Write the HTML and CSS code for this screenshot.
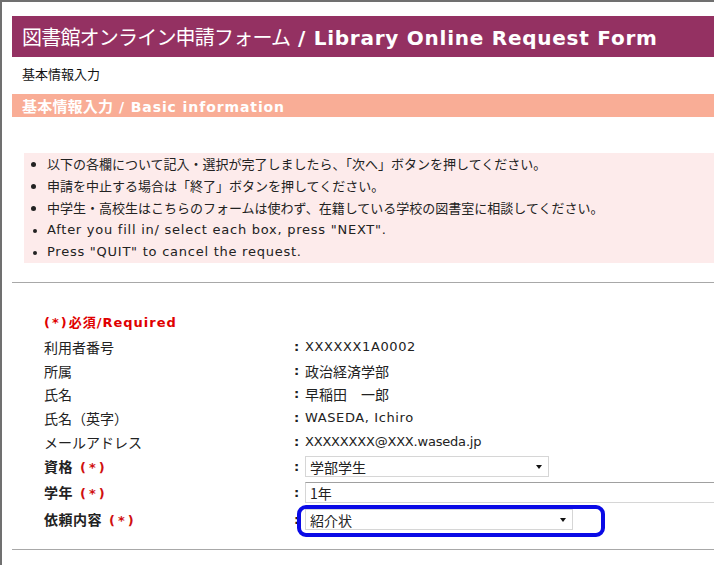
FILE: index.html
```html
<!DOCTYPE html>
<html lang="ja">
<head>
<meta charset="utf-8">
<title>Library Online Request Form</title>
<link rel="stylesheet" href="styles.css">
</head>
<body>
<div class="frame">
  <h1 class="title"><span class="jp">図書館オンライン申請フォーム</span> / Library Online Request Form</h1>
  <div class="crumb">基本情報入力</div>
  <h2 class="section"><span class="jp">基本情報入力</span> / Basic information</h2>

  <ul class="notes">
    <li>以下の各欄について記入・選択が完了しましたら、「次へ」ボタンを押してください。</li>
    <li>申請を中止する場合は「終了」ボタンを押してください。</li>
    <li>中学生・高校生はこちらのフォームは使わず、在籍している学校の図書室に相談してください。</li>
    <li class="en">After you fill in/ select each box, press "NEXT".</li>
    <li class="en">Press "QUIT" to cancel the request.</li>
  </ul>

  <hr class="rule">

  <div class="form">
    <div class="required"><span class="req">(*)</span>必須/Required</div>
    <div class="row"><div class="label">利用者番号</div><div class="colon">:</div><div class="value en">XXXXXX1A0002</div></div>
    <div class="row"><div class="label">所属</div><div class="colon">:</div><div class="value">政治経済学部</div></div>
    <div class="row"><div class="label">氏名</div><div class="colon">:</div><div class="value">早稲田　一郎</div></div>
    <div class="row"><div class="label">氏名（英字）</div><div class="colon">:</div><div class="value en">WASEDA, Ichiro</div></div>
    <div class="row"><div class="label">メールアドレス</div><div class="colon">:</div><div class="value mail">XXXXXXXX@XXX.waseda.jp</div></div>
    <div class="row frow"><div class="label strong">資格<span class="req">(*)</span></div><div class="colon">:</div>
      <div class="value"><div class="select s1"><span>学部学生</span><span class="arrow"></span></div></div></div>
    <div class="row frow"><div class="label strong">学年<span class="req">(*)</span></div><div class="colon">:</div>
      <div class="value grow"><div class="input">1年</div></div></div>
    <div class="row frow last"><div class="label strong">依頼内容<span class="req">(*)</span></div><div class="colon">:</div>
      <div class="value"><div class="mark-wrap"><div class="select s2"><span>紹介状</span><span class="arrow"></span></div><div class="mark"></div></div></div></div>
  </div>

  <hr class="rule bottom">
</div>
</body>
</html>
```

FILE: styles.css
```css
html, body {
  margin: 0;
  padding: 0;
  background: #fff;
}
.frame {
  box-sizing: border-box;
  min-height: 565px;
  border-top: 2px solid #707070;
  border-left: 2px solid #707070;
  padding: 14px 0 0 10px;
  font-family: "Noto Sans CJK JP", "DejaVu Sans", sans-serif;
  color: #222;
  overflow: hidden;
}
.title {
  margin: 0;
  height: 41px;
  line-height: 41px;
  background: #943162;
  color: #fff;
  font-family: "DejaVu Sans", "Noto Sans CJK JP", sans-serif;
  font-weight: bold;
  font-size: 20px;
  padding-left: 10px;
  white-space: nowrap;
  letter-spacing: 0.75px;
}
.title .jp {
  font-family: "Noto Sans CJK JP", sans-serif;
  font-weight: 400;
  font-size: 20px;
  letter-spacing: -0.8px;
}
.crumb {
  height: 37px;
  line-height: 34px;
  font-size: 13px;
  padding-left: 10px;
  color: #111;
}
.section {
  margin: 0;
  height: 23px;
  line-height: 23px;
  background: #f9ad96;
  color: #fff;
  font-family: "DejaVu Sans", "Noto Sans CJK JP", sans-serif;
  font-size: 14px;
  font-weight: bold;
  padding-left: 10px;
  letter-spacing: 0.9px;
  white-space: nowrap;
}
.section .jp {
  font-family: "Noto Sans CJK JP", sans-serif;
  font-size: 15px;
  letter-spacing: 0.2px;
}
.notes {
  margin: 36px 0 0 12px;
  padding: 0 0 0 23px;
  background: #fdebeb;
  font-size: 13px;
  line-height: 22px;
  height: 110px;
  list-style: disc;
  color: #222;
}
.notes li::marker {
  font-size: 12px;
  letter-spacing: 0;
}
.notes .en {
  font-family: "DejaVu Sans", sans-serif;
  font-size: 13px;
  letter-spacing: 0.75px;
}
.rule {
  margin: 19px 0 0 0;
  border: 0;
  border-top: 1px solid #a8a8a8;
  height: 0;
}
.rule.bottom {
  margin-top: 15px;
}
.form {
  padding: 28px 0 0 32px;
  font-size: 14px;
}
.required {
  color: #e00000;
  font-weight: bold;
  font-family: "DejaVu Sans", "Noto Sans CJK JP", sans-serif;
  font-size: 13px;
  height: 24px;
  line-height: 24px;
  letter-spacing: 1px;
}
.required .req {
  color: #e00000;
  letter-spacing: 2px;
}
.row {
  display: flex;
  align-items: center;
  height: 23.75px;
  line-height: 20px;
}
.row.frow { height: 26px; }
.row.frow.last { height: 28px; }
.label {
  width: 250px;
  flex: none;
  color: #222;
  font-size: 14px;
}
.label.strong {
  font-weight: bold;
  letter-spacing: 0.5px;
}
.req {
  color: #d01010;
  font-family: "DejaVu Sans", sans-serif;
  font-weight: bold;
  letter-spacing: 3px;
  margin-left: 7px;
  font-size: 13px;
}
.required .req { margin-left: 0; }
.colon {
  width: 11px;
  flex: none;
  font-weight: bold;
  font-family: "DejaVu Sans", sans-serif;
  font-size: 13px;
}
.value { flex: none; }
.value.grow { flex: 1; }
.value.en {
  font-family: "DejaVu Sans", sans-serif;
  font-size: 13px;
  letter-spacing: 0.6px;
}
.value.mail {
  font-family: "DejaVu Sans", sans-serif;
  font-size: 13px;
  letter-spacing: -0.2px;
}
.select, .input {
  box-sizing: border-box;
  height: 21px;
  border: 1px solid #d6d6d6;
  background: #fff;
  display: flex;
  align-items: center;
  padding-left: 4px;
  font-size: 14px;
  color: #222;
}
.select { justify-content: space-between; padding-right: 6px; }
.s1 { width: 244px; }
.s2 { width: 268px; }
.input {
  width: 100%;
  border-top: 1px solid #a0a0a0;
  border-right: 0;
}
.arrow {
  width: 0;
  height: 0;
  border-left: 3.5px solid transparent;
  border-right: 3.5px solid transparent;
  border-top: 4px solid #111;
}
.mark-wrap { position: relative; }
.mark {
  position: absolute;
  left: -8px;
  top: -4px;
  width: 300px;
  height: 24px;
  border: 4px solid #0a0ae6;
  border-radius: 9px;
  pointer-events: none;
}
```
